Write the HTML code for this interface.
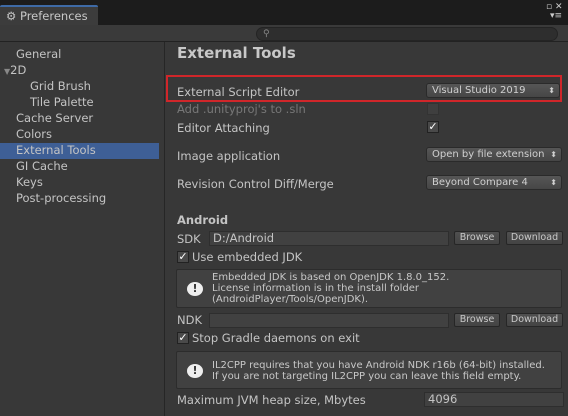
<!DOCTYPE html><html><head><style>
*{margin:0;padding:0;box-sizing:border-box}
body{width:568px;height:416px;overflow:hidden;background:#383838;font-family:"DejaVu Sans","Liberation Sans",sans-serif;font-size:11px;color:#c4c4c4;position:relative}
.a{position:absolute;white-space:nowrap}
.r{position:absolute;background:#d0262a;z-index:9}
.pop{position:absolute;height:15px;background:linear-gradient(#565656,#464646);border:1px solid #2a2a2a;border-radius:3px;font-size:10px;padding:0 5px;line-height:13px;color:#d0d0d0}
.pop:after{content:"⬍";position:absolute;right:4px;top:0;font-size:8px}
.btn{position:absolute;height:14px;background:linear-gradient(#505050,#444);border:1px solid #262626;border-radius:2px;font-size:9.5px;text-align:center;line-height:12px;color:#c8c8c8}
.fld{position:absolute;height:15px;background:#414141;border:1px solid #2e2e2e}
.chk{position:absolute;width:12px;height:12px;background:#4a4a4a;border:1px solid #222;color:#fff;font-size:11px;line-height:10px;text-align:center;font-weight:bold}
.hb{position:absolute;background:#414141;border:1px solid #2c2c2c;border-radius:2px;font-size:10px;line-height:11px;color:#c8c8c8}
.bub{position:absolute;left:10px;width:16px;height:14px;background:#eee;border-radius:50%;color:#333;font-weight:bold;font-size:11px;text-align:center;line-height:14px}
.s{position:absolute;left:16px;font-size:11.5px}
</style></head><body>
<div class="a" style="left:0;top:0;width:568px;height:25px;background:#1c1c1c"></div>
<div class="a" style="left:0;top:5px;width:98px;height:20px;background:#3c3c3c;border-top:2px solid #3e6aa6;border-radius:2px 2px 0 0;color:#c8c8c8;font-size:11.5px;padding:2px 0 0 6px">⚙ Preferences</div>
<div class="a" style="left:546px;top:2px;font-size:9px;color:#ccc">▫ ✕</div>
<div class="a" style="left:550px;top:11px;font-size:9px;color:#ccc">▾≡</div>
<div class="a" style="left:0;top:25px;width:568px;height:17px;background:#3a3a3a;border-bottom:1px solid #222"></div>
<div class="a" style="left:256px;top:27px;width:302px;height:14px;background:#2e2e2e;border:1px solid #242424;border-radius:7px;font-size:9px;padding-left:6px;line-height:12px;color:#888">⚲</div>
<div class="a" style="left:164px;top:42px;width:1px;height:374px;background:#262626"></div>
<div class="a" style="left:0;top:143px;width:159px;height:16px;background:#3e5f96"></div>
<div class="s" style="top:47px">General</div>
<div class="s" style="top:63px;left:4px"><span style="font-size:8px;color:#888">▼</span>2D</div>
<div class="s" style="top:79px;left:30px">Grid Brush</div>
<div class="s" style="top:95px;left:30px">Tile Palette</div>
<div class="s" style="top:111px">Cache Server</div>
<div class="s" style="top:127px">Colors</div>
<div class="s" style="top:143px">External Tools</div>
<div class="s" style="top:159px">GI Cache</div>
<div class="s" style="top:175px">Keys</div>
<div class="s" style="top:191px">Post-processing</div>
<div class="a" style="left:177px;top:44px;font-size:15px;font-weight:bold;color:#c8c8c8">External Tools</div>
<div class="a" style="left:177px;top:85px;font-size:11.5px">External Script Editor</div>
<div class="pop" style="left:426px;top:83px;width:134px">Visual Studio 2019</div>
<div class="r" style="left:166px;top:75px;width:396px;height:2px"></div>
<div class="r" style="left:166px;top:100px;width:396px;height:2px"></div>
<div class="r" style="left:166px;top:75px;width:2px;height:27px"></div>
<div class="r" style="left:560px;top:75px;width:2px;height:27px"></div>
<div class="a" style="left:177px;top:102px;font-size:11.5px;color:#777">Add .unityproj's to .sln</div>
<div class="chk" style="left:427px;top:103px;background:#3f3f3f;border-color:#333"></div>
<div class="a" style="left:177px;top:121px;font-size:11.5px">Editor Attaching</div>
<div class="chk" style="left:427px;top:121px">✓</div>
<div class="a" style="left:177px;top:149px;font-size:11.5px">Image application</div>
<div class="pop" style="left:426px;top:147px;width:136px">Open by file extension</div>
<div class="a" style="left:177px;top:177px;font-size:11.5px">Revision Control Diff/Merge</div>
<div class="pop" style="left:426px;top:175px;width:136px">Beyond Compare 4</div>
<div class="a" style="left:177px;top:213px;font-size:11.5px;font-weight:bold">Android</div>
<div class="a" style="left:177px;top:232px;font-size:11.5px">SDK</div>
<div class="fld" style="left:209px;top:231px;width:240px;font-size:11.5px;padding-left:3px;line-height:13px">D:/Android</div>
<div class="btn" style="left:454px;top:231px;width:46px">Browse</div>
<div class="btn" style="left:506px;top:231px;width:57px">Download</div>
<div class="chk" style="left:177px;top:251px">✓</div>
<div class="a" style="left:192px;top:250px;font-size:11.5px">Use embedded JDK</div>
<div class="hb" style="left:176px;top:269px;width:386px;height:39px"><div class="bub" style="top:12px">!</div><div style="position:absolute;left:35px;top:2px">Embedded JDK is based on OpenJDK 1.8.0_152.<br>License information is in the install folder<br>(AndroidPlayer/Tools/OpenJDK).</div></div>
<div class="a" style="left:177px;top:313px;font-size:11.5px">NDK</div>
<div class="fld" style="left:209px;top:313px;width:240px"></div>
<div class="btn" style="left:454px;top:313px;width:46px">Browse</div>
<div class="btn" style="left:506px;top:313px;width:57px">Download</div>
<div class="chk" style="left:177px;top:332px">✓</div>
<div class="a" style="left:192px;top:331px;font-size:11.5px">Stop Gradle daemons on exit</div>
<div class="hb" style="left:176px;top:351px;width:386px;height:38px"><div class="bub" style="top:12px">!</div><div style="position:absolute;left:35px;top:8px">IL2CPP requires that you have Android NDK r16b (64-bit) installed.<br>If you are not targeting IL2CPP you can leave this field empty.</div></div>
<div class="a" style="left:177px;top:393px;font-size:11.5px">Maximum JVM heap size, Mbytes</div>
<div class="fld" style="left:424px;top:392px;width:140px;font-size:11.5px;padding-left:3px;line-height:13px">4096</div>
</body></html>
